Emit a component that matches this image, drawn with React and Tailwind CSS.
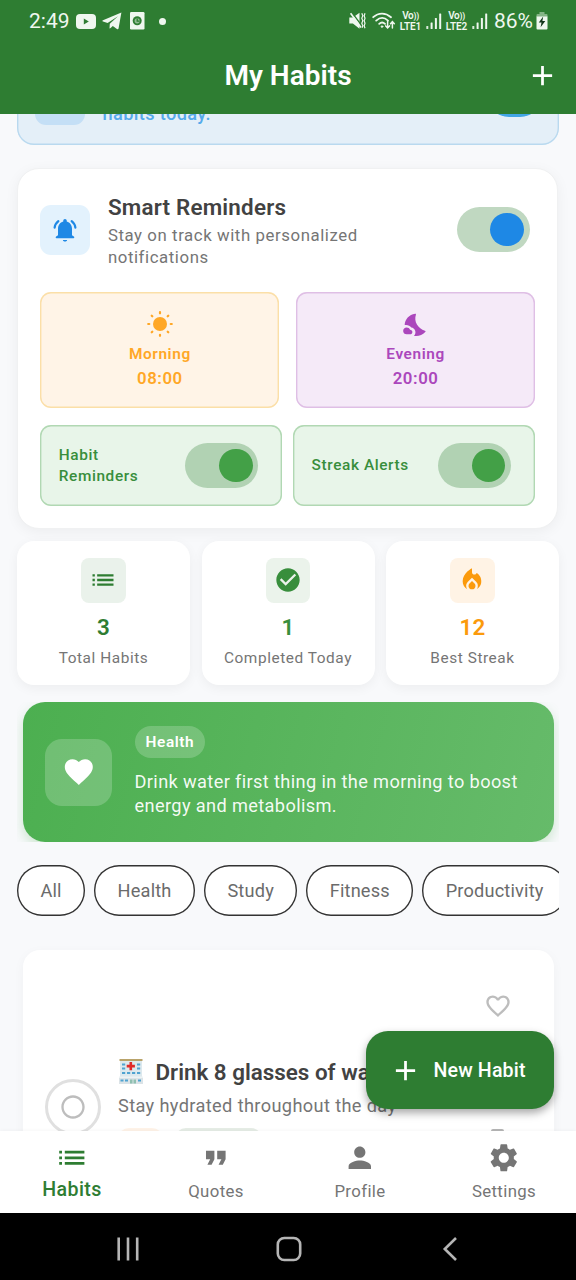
import {
  MdAdd,
  MdCheckCircle,
  MdFavorite,
  MdFavoriteBorder,
  MdFormatQuote,
  MdList,
  MdLocalFireDepartment,
  MdPerson,
  MdRadioButtonUnchecked,
  MdSettings,
} from "react-icons/md";

function Signal() {
  return (
    <svg viewBox="0 0 16 17" className="h-[17px] w-4 shrink-0" fill="currentColor">
      <rect x="0.3" y="13" width="2" height="3" rx="0.5" opacity="0.9" />
      <rect x="4.6" y="9.5" width="2" height="6.5" rx="0.5" />
      <rect x="8.9" y="5" width="2" height="11" rx="0.5" />
      <rect x="13.2" y="0.5" width="2" height="15.5" rx="0.5" />
    </svg>
  );
}

function Volte({ line }) {
  return (
    <div className="flex w-[22px] shrink-0 flex-col items-center text-[10px] leading-[9.500px] font-semibold whitespace-nowrap">
      <span className="tracking-[-0.300px]">Vo<span className="text-[8.500px]">))</span></span>
      <span className="tracking-[-0.100px]">LTE{line}</span>
    </div>
  );
}

function StatusBar() {
  return (
    <div className="flex h-[42px] items-center pl-[29px] text-[#eff7ef]">
      <span className="w-[47px] text-[21px] leading-[42px]">2:49</span>
      <svg viewBox="0 0 20 15" className="h-[15px] w-5">
        <rect width="20" height="15" rx="4" fill="currentColor" />
        <path d="M7.8 4.600v5.800l5-2.900z" fill="#2e7d32" />
      </svg>
      <svg viewBox="0 0 20 18" className="ml-[6px] h-[18px] w-5" fill="currentColor">
        <path d="M19.4.6 1 8.200c-.8.4-.8.9 0 1.200l4.600 1.500L16 4.200 7.800 11.800l-.3 4.700c.5 0 .8-.2 1.100-.5l2.200-2.100 4.100 3.200c.9.5 1.500.2 1.700-.8z" />
      </svg>
      <svg viewBox="0 0 15 18" className="ml-2 h-[18px] w-[15px]">
        <rect width="14.500" height="17.500" rx="1.200" fill="currentColor" />
        <circle cx="7.200" cy="8.800" r="4.500" fill="#2e7d32" />
        <circle cx="7.200" cy="8.800" r="2.600" fill="#8fbb91" />
        <path d="M7.200 6.500v2.600h2.400" stroke="#2e7d32" strokeWidth="1.300" fill="none" />
      </svg>
      <span className="ml-[14px] h-[7px] w-[7px] rounded-full bg-current" />
      <svg viewBox="0 0 17 18" className="ml-auto h-[18px] w-[17px] shrink-0" fill="none" stroke="currentColor">
        <path d="M.3 5.600v5.800h3.600l6.600 5.300V.8L3.900 5.600z" fill="currentColor" stroke="none" />
        <path d="M3.200 1 13 14" stroke="#2e7d32" strokeWidth="1.300" />
        <path d="M1.600 1.200 12 15.400" strokeWidth="1.700" />
        <path d="m12.800 1.200 1 2.500-1 2.500 1 2.500-1 2.500 1 2.500-.7 2M16 1.200l-.8 2.500.8 2.500-.8 2.500.8 2.500-.8 2.500.8 2.500" strokeWidth="1.200" />
      </svg>
      <svg viewBox="0 0 24 18" className="ml-[6px] h-[18px] w-6 shrink-0" fill="none" stroke="currentColor" strokeWidth="1.800" strokeLinecap="round">
        <path d="M1.200 5.200C6.500.4 13.500.4 19 5.200M4.200 8.600c3.700-3.300 8.200-3.300 11.800 0M7.200 11.800c1.800-1.700 4-1.700 5.800 0" />
        <circle cx="10" cy="14.600" r=".8" fill="currentColor" strokeWidth="1" />
        <path d="M15.600 9.500v6.200m-1.900-1.800 1.900 2 1.900-2M20.400 16V9.900m-1.900 1.800 1.900-2 1.900 2" strokeWidth="1.500" />
      </svg>
      <div className="ml-1 flex items-center gap-1">
        <Volte line="1" />
        <Signal />
        <Volte line="2" />
        <Signal />
      </div>
      <span className="ml-[6.500px] text-[21px] leading-[42px]">86%</span>
      <svg viewBox="0 0 12 18" className="mr-[28px] ml-[3px] h-[18px] w-3 shrink-0">
        <path d="M3.500 0h5v2h2a1 1 0 0 1 1 1v2H.5V3a1 1 0 0 1 1-1h2z" fill="#84b486" />
        <path d="M.5 4.500h11v12a1 1 0 0 1-1 1h-9a1 1 0 0 1-1-1z" fill="currentColor" />
        <path d="M7.200 4.600 2.800 10.600h2.700l-.9 4.600 4.700-6.200H6.400z" fill="#12351a" />
      </svg>
    </div>
  );
}

function Toggle({ track, knob }) {
  return (
    <div className={`flex h-[45px] w-[73px] shrink-0 items-center justify-end rounded-full pr-[5.6px] ${track}`}>
      <div className={`h-[33.600px] w-[33.600px] rounded-full ${knob}`} />
    </div>
  );
}

function BellIcon() {
  return (
    <svg viewBox="0 0 24 24" className="h-7 w-7" fill="#1e88e5">
      <path d="M18 16.500V11c0-3.070-1.630-5.640-4.500-6.320V4c0-.83-.67-1.500-1.500-1.500s-1.500.67-1.500 1.500v.68C7.640 5.360 6 7.920 6 11v5.500l-1.600 1.100c-.7.600-.4 1.400.3 1.400h14.600c.7 0 1-.8.3-1.400zM12 21.800c1.100 0 1.800-.5 1.800-1.300h-3.600c0 .8.700 1.300 1.800 1.300z" />
      <path d="M6.300 4.400C4.500 5.800 3.400 7.700 3.100 10M17.700 4.400c1.800 1.400 2.900 3.300 3.200 5.600" fill="none" stroke="#1e88e5" strokeWidth="1.900" strokeLinecap="round" />
    </svg>
  );
}

function SunIcon() {
  return (
    <svg viewBox="0 0 24 24" className="h-7 w-7" fill="currentColor">
      <circle cx="12" cy="12" r="6" />
      <path
        d="M12 1.900v.9M12 21.200v.9M1.900 12h.9M21.200 12h.9M4.900 4.900l.5.500M18.600 18.600l.5.500M4.900 19.100l.5-.5M18.600 5.400l.5-.5"
        stroke="currentColor"
        strokeWidth="1.900"
        strokeLinecap="round"
      />
    </svg>
  );
}

function MoonCloudIcon() {
  return (
    <svg viewBox="0 0 24 24" className="h-7 w-7" fill="currentColor">
      <path d="M11.200 3.200c.7-.1.900.2.700.8-.9 2.900-.6 5.900.9 8.500 1.500 2.500 3.900 4.400 6.800 5.200.7.200.8.700.3 1.200-2.500 2.600-5.900 3.800-9.700 3.200 1.300-1.200 1.700-3 1-4.600-.6-1.400-1.700-2.300-3.200-2.500-1.300-1.700-3.300-2.600-5.700-2.100.1-4.900 3.900-9.100 8.900-9.700z" />
      <path d="M6.900 16.900c-.5-1.200-1.600-1.900-2.900-1.900-1.700 0-3 1.300-3 2.900s1.300 2.900 3 2.900h2.900c1.100 0 2-.9 2-2s-.9-1.900-2-1.900z" />
    </svg>
  );
}

function TimeCard({ icon, label, time, tone }) {
  return (
    <div className={`flex h-[116px] flex-1 flex-col items-center rounded-[11px] pt-[18px] font-semibold ${tone}`}>
      {icon}
      <span className="mt-[5.600px] text-[15.400px] leading-[20.500px] tracking-[0.600px]">{label}</span>
      <span className="mt-[3px] text-[16.800px] leading-[22.400px] tracking-[0.560px]">{time}</span>
    </div>
  );
}

function AlertCard({ label }) {
  return (
    <div className="flex h-[81px] flex-1 items-center justify-between rounded-[11px] bg-[#e8f5e9] pr-[24px] pl-[18.400px] shadow-[inset_0_0_0_1.4px_#b1d8b3]">
      <span className="w-[100px] text-[15.400px] leading-[20.800px] font-medium tracking-[0.600px] text-[#388e3c]">{label}</span>
      <Toggle track="bg-[#b1d2b3]" knob="bg-[#43a047]" />
    </div>
  );
}

function SmartReminders() {
  return (
    <section className="mt-[22.500px] mr-[17.600px] ml-[17px] h-[361px] rounded-[22px] border border-[#f0f1f2] bg-white px-[22.400px] pt-[22px] shadow-[0_3px_14px_rgba(0,0,0,0.05)]">
      <div className="flex h-[78px] items-center">
        <div className="flex h-[50px] w-[50px] items-center justify-center rounded-[11px] bg-[#e3f2fd]">
          <BellIcon />
        </div>
        <div className="ml-[17.500px] w-[300px]">
          <h2 className="text-[22.400px] leading-[33px] font-semibold tracking-[0.210px] text-[#424242]">Smart Reminders</h2>
          <p className="text-[16.800px] leading-[22.400px] tracking-[0.580px] text-[#757575]">Stay on track with personalized notifications</p>
        </div>
        <div className="mr-[5.500px] ml-auto">
          <Toggle track="bg-[#c0d8c1]" knob="bg-[#1e88e5]" />
        </div>
      </div>
      <div className="mt-[23.500px] flex gap-[16.800px]">
        <TimeCard icon={<SunIcon />} label="Morning" time="08:00" tone="bg-[#fff4e7] text-[#ffa726] shadow-[inset_0_0_0_1.4px_#fbdfa8]" />
        <TimeCard icon={<MoonCloudIcon />} label="Evening" time="20:00" tone="bg-[#f5eaf8] text-[#ab47bc] shadow-[inset_0_0_0_1.4px_#dfbfe5]" />
      </div>
      <div className="mt-[17px] flex gap-[11px]">
        <AlertCard label="Habit Reminders" />
        <AlertCard label="Streak Alerts" />
      </div>
    </section>
  );
}

function StatCard({ icon, value, label, tile, color }) {
  return (
    <div className="flex h-[144px] flex-1 flex-col items-center rounded-[17px] bg-white pt-[16.800px] shadow-[0_3px_12px_rgba(0,0,0,0.05)]">
      <div className={`flex h-[44.800px] w-[44.800px] items-center justify-center rounded-[8px] ${tile} ${color}`}>{icon}</div>
      <span className={`mt-[10.400px] text-[22.400px] leading-[28px] font-semibold tracking-[0.200px] ${color}`}>{value}</span>
      <span className="mt-[6.800px] text-[15.400px] leading-[20.500px] tracking-[0.560px] whitespace-nowrap text-[#757575]">{label}</span>
    </div>
  );
}

function Chip({ label, width }) {
  return (
    <span className={`flex h-[51px] shrink-0 items-center justify-center rounded-[25px] bg-white text-[18.200px] tracking-[0.180px] text-[#6b6b6b] shadow-[inset_0_0_0_1.4px_#333] ${width}`}>
      {label}
    </span>
  );
}

function HospitalIcon() {
  return (
    <svg viewBox="0 0 24 26" className="h-[26px] w-6 shrink-0">
      <rect x="1" y="1" width="22" height="17" fill="#dde9ee" />
      <rect x=".5" y="0" width="23" height="2" fill="#b9a36a" />
      <g fill="#4fa3d1">
        <rect x="3" y="4.500" width="3.200" height="2" />
        <rect x="18" y="4.500" width="3.200" height="2" />
        <rect x="3" y="8.500" width="3.200" height="2" />
        <rect x="18" y="8.500" width="3.200" height="2" />
        <rect x="3" y="13" width="3.200" height="2" />
        <rect x="8" y="13" width="3.200" height="2" />
        <rect x="13" y="13" width="3.200" height="2" />
        <rect x="18" y="13" width="3.200" height="2" />
      </g>
      <path d="M10.500 3h2.600v2.800h2.800v2.600h-2.800v2.800h-2.600V8.400H7.700V5.800h2.800z" fill="#e02a2a" />
      <path d="M0 18h24v7H0z" fill="#dbe3e7" />
      <path d="M0 17.500h24v1.500H0z" fill="#edf3f5" />
      <g fill="#4fa3d1">
        <rect x="1.500" y="20.500" width="3" height="2" />
        <rect x="6" y="20.500" width="3" height="2" />
        <rect x="19" y="20.500" width="3" height="2" />
      </g>
      <rect x="11" y="20.500" width="2.500" height="4" fill="#8fbfb0" />
      <rect x="14.500" y="20.500" width="2.500" height="4" fill="#8fbfb0" />
    </svg>
  );
}

function HabitCard() {
  return (
    <section className="mx-[22.500px] mt-[33.500px] flex h-[300px] rounded-[17px] bg-white pl-[22.500px] shadow-[0_3px_12px_rgba(0,0,0,0.04)]">
      <div className="mt-[129.500px] flex h-[56px] w-[56px] shrink-0 items-center justify-center rounded-full border-3 border-[#e0e0e0]">
        <MdRadioButtonUnchecked className="h-7 w-7 text-[#bdbdbd]" />
      </div>
      <div className="mt-[106px] ml-[17px] flex w-[365.500px] shrink-0 flex-col">
        <div className="flex h-[33px] items-center pl-[1px] whitespace-nowrap">
          <HospitalIcon />
          <h3 className="ml-[12.500px] text-[22.400px] leading-[33px] font-semibold text-[#424242]">Drink 8 glasses of water</h3>
        </div>
        <p className="mt-[4px] text-[18.200px] leading-[25px] tracking-[0.370px] text-[#757575]">Stay hydrated throughout the day</p>
        <div className="mt-[10.500px] flex gap-3">
          <span className="h-[30px] w-[45px] rounded-[11px] bg-[#fff3e8]" />
          <span className="h-[30px] w-[87px] rounded-[11px] bg-[#e6ede6]" />
        </div>
      </div>
      <div className="mt-[42.500px] flex flex-col items-center">
        <MdFavoriteBorder className="h-7 w-7 text-[#bdbdbd]" />
        <span className="mt-[109px] h-[24px] w-[13px] rounded-[2px] bg-[#b5b5b5]" />
      </div>
    </section>
  );
}

function NavItem({ icon: Icon, label, active }) {
  return (
    <div className={`flex w-[144px] flex-col items-center pt-[10px] ${active ? "text-[#2e7d32]" : "text-[#757575]"}`}>
      <Icon className="h-[33.600px] w-[33.600px]" />
      <span className={active ? "mt-[1px] text-[19.600px] leading-[27px] font-medium tracking-[0.370px]" : "mt-[4.500px] text-[16.800px] leading-[24px] tracking-[0.370px]"}>
        {label}
      </span>
    </div>
  );
}

export default function App() {
  return (
    <div className="relative flex h-[1280px] w-[576px] flex-col overflow-hidden bg-[#f8f9fb] font-['Roboto',sans-serif]">
      <header className="z-10 h-[114px] shrink-0 bg-[#2e7d32] text-white">
        <StatusBar />
        <div className="grid h-[67px] grid-cols-[1fr_auto_1fr] items-center">
          <h1 className="col-start-2 text-[28px] leading-[36px] font-semibold">My Habits</h1>
          <MdAdd className="mr-[17px] h-[33px] w-[33px] justify-self-end" />
        </div>
      </header>

      <main className="min-h-0 flex-1 overflow-hidden">
        <div className="mx-[17px] -mt-[89px] flex h-[120px] items-end rounded-[17px] bg-[#e4eff8] pl-[18px] shadow-[inset_0_0_0_1.4px_#b9d9ef]">
          <div className="mb-[20px] h-[50px] w-[50px] rounded-[11px] bg-[#c4dff6]" />
          <p className="mb-[19.500px] ml-[17.500px] text-[18.200px] leading-[25px] font-medium tracking-[0.370px] text-[#55aaeb]">habits today.</p>
          <div className="mr-[17px] mb-[28.500px] ml-auto h-[45px] w-[55px] rounded-[22px] bg-[#42a5e5]" />
        </div>

        <SmartReminders />

        <div className="mx-[17px] mt-[12.500px] flex gap-[11.500px]">
          <StatCard icon={<MdList className="h-7 w-7" />} value="3" label="Total Habits" tile="bg-[#eaf2eb]" color="text-[#2e7d32]" />
          <StatCard icon={<MdCheckCircle className="h-7 w-7" />} value="1" label="Completed Today" tile="bg-[#ebf3eb]" color="text-[#388e3c]" />
          <StatCard icon={<MdLocalFireDepartment className="h-7 w-7" />} value="12" label="Best Streak" tile="bg-[#fff3e5]" color="text-[#fb9a0c]" />
        </div>

        <div className="mx-[17px] mt-[17px] overflow-hidden px-[5.500px]">
          <section className="flex h-[140px] items-center rounded-[22px] bg-linear-[105deg] from-[#4caf50] to-[#66bb6a] pl-[22.500px] shadow-[0_5px_12px_rgba(76,175,80,0.25)]">
            <div className="flex h-[67px] w-[67px] items-center justify-center rounded-[17px] bg-white/20 text-white">
              <MdFavorite className="h-[33.600px] w-[33.600px]" />
            </div>
            <div className="ml-[22.500px] flex flex-col items-start">
              <span className="flex h-[32px] items-center rounded-[17px] bg-white/20 px-[11px] text-[15.400px] font-semibold tracking-[0.600px] text-white">Health</span>
              <p className="mt-[11.500px] w-[400px] text-[18.200px] leading-[24px] tracking-[0.370px] text-white/95">
                Drink water first thing in the morning to boost energy and metabolism.
              </p>
            </div>
          </section>
        </div>

        <div className="mx-[17px] mt-[23px] flex gap-[8.800px] overflow-hidden">
          <Chip label="All" width="w-[68.200px]" />
          <Chip label="Health" width="w-[101.200px]" />
          <Chip label="Study" width="w-[93.400px]" />
          <Chip label="Fitness" width="w-[107.200px]" />
          <Chip label="Productivity" width="w-[145px]" />
        </div>

        <HabitCard />
      </main>

      <button className="absolute top-[1031px] left-[366px] flex h-[78px] w-[187.500px] items-center rounded-[22px] bg-[#2e7d32] pl-[23px] text-[19.600px] font-medium tracking-[0.140px] text-white shadow-[0_4px_9px_rgba(0,0,0,0.35)]">
        <MdAdd className="h-[33px] w-[33px]" />
        <span className="mt-[1.500px] ml-[11.500px]">New Habit</span>
      </button>

      <nav className="z-10 flex h-[82px] shrink-0 bg-white shadow-[0_-1px_3px_rgba(0,0,0,0.03)]">
        <NavItem icon={MdList} label="Habits" active />
        <NavItem icon={MdFormatQuote} label="Quotes" />
        <NavItem icon={MdPerson} label="Profile" />
        <NavItem icon={MdSettings} label="Settings" />
      </nav>

      <footer className="z-10 flex h-[67px] shrink-0 items-center bg-black pt-[4px] pl-[116px] text-[#b5b5b5]">
        <svg viewBox="0 0 24 24" className="h-6 w-6" stroke="currentColor" strokeWidth="2.600">
          <path d="M2.700.5v23M12 .5v23M21.200.5v23" />
        </svg>
        <svg viewBox="0 0 26 26" className="ml-[136px] h-[26px] w-[26px]" fill="none" stroke="currentColor" strokeWidth="2.600">
          <rect x="1.800" y="2" width="22.400" height="22" rx="6.500" />
        </svg>
        <svg viewBox="0 0 16 24" className="ml-[140px] h-6 w-4" fill="none" stroke="currentColor" strokeWidth="2.600">
          <path d="M14 1 2.800 12 14 23" />
        </svg>
      </footer>
    </div>
  );
}
